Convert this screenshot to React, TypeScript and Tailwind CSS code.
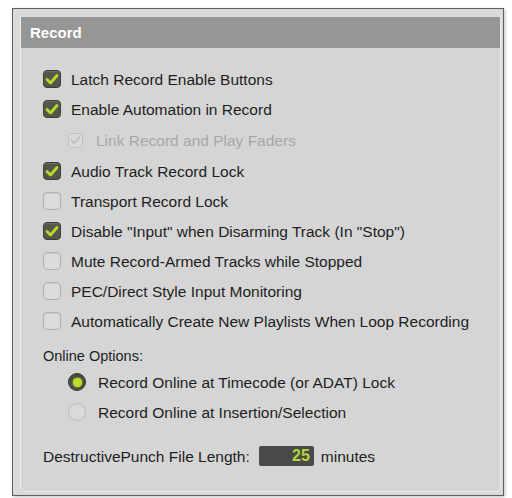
import React from "react";

const font = { fontFamily: '"Liberation Sans", Arial, sans-serif' };

function CheckBox({ state }: { state: "on" | "off" | "dis" }) {
  if (state === "on") {
    return (
      <div className="w-[18px] h-[18px] rounded-[4px] bg-[#55554a] border border-[#3e3e36] flex items-center justify-center shadow-[inset_0_1px_1px_rgba(255,255,255,0.15)]">
        <svg width="14" height="12" viewBox="0 0 14 12">
          <path d="M2 6.5 L5.5 10 L12 2.5" fill="none" stroke="#b6dc2a" strokeWidth="2.8" strokeLinecap="round" strokeLinejoin="round" />
        </svg>
      </div>
    );
  }
  if (state === "dis") {
    return (
      <div className="w-[15px] h-[15px] rounded-[3px] bg-[#dadada] border border-[#c2c2c2] flex items-center justify-center">
        <svg width="11" height="10" viewBox="0 0 14 12">
          <path d="M2 6.5 L5.5 10 L12 2.5" fill="none" stroke="#bdbdbd" strokeWidth="2" strokeLinecap="round" strokeLinejoin="round" />
        </svg>
      </div>
    );
  }
  return <div className="w-[18px] h-[18px] rounded-[4px] bg-[#dcdcdc] border border-[#b0b0b0] shadow-[inset_0_1px_1px_rgba(0,0,0,0.08)]" />;
}

function Row({ state, label, indent }: { state: "on" | "off" | "dis"; label: string; indent?: boolean }) {
  return (
    <div className={`flex items-center ${indent ? "h-[32px] pl-[47px]" : "h-[30px] pl-[22px]"}`}>
      <div className="w-[28px] flex">
        <CheckBox state={state} />
      </div>
      <span className={`text-[15.5px] leading-none pt-[1px] ${state === "dis" ? "text-[#a8a8a8]" : "text-[#1e1e1e]"}`}>{label}</span>
    </div>
  );
}

function Radio({ on, label }: { on: boolean; label: string }) {
  return (
    <div className="h-[30px] flex items-center pl-[47px]">
      <div className="w-[30px] flex">
        {on ? (
          <div className="w-[18px] h-[18px] rounded-full bg-[#4c4c40] border border-[#3a3a32] flex items-center justify-center">
            <div className="w-[9px] h-[9px] rounded-full bg-[#b8e02a] shadow-[0_0_2px_#c8f040]" />
          </div>
        ) : (
          <div className="w-[18px] h-[18px] rounded-full bg-[#dadada] border border-[#bcbcbc]" />
        )}
      </div>
      <span className="text-[15.5px] leading-none pt-[1px] text-[#1e1e1e]">{label}</span>
    </div>
  );
}

export default function App() {
  return (
    <div className="w-[512px] h-[498px] bg-white pt-[8px] pl-[12px] pr-[8px] pb-[2px]" style={font}>
      <div className="w-full h-[488px] border border-[#5e5e5e] bg-[#dadada] pt-[8px] pl-[7px] pr-[2px] pb-[3px] shadow-[1px_1px_3px_rgba(0,0,0,0.25)]">
        <div className="h-full flex flex-col rounded-b-[5px] border border-[#ececec] border-t-0 bg-[#d5d5d5]">
          <div className="h-[31px] bg-[#969696] flex items-center pl-[9px]">
            <span className="text-white font-bold text-[15px] leading-none">Record</span>
          </div>
          <div className="flex flex-col pt-[16px]">
            <Row state="on" label="Latch Record Enable Buttons" />
            <Row state="on" label="Enable Automation in Record" />
            <Row state="dis" label="Link Record and Play Faders" indent />
            <Row state="on" label="Audio Track Record Lock" />
            <Row state="off" label="Transport Record Lock" />
            <Row state="on" label='Disable "Input" when Disarming Track (In "Stop")' />
            <Row state="off" label="Mute Record-Armed Tracks while Stopped" />
            <Row state="off" label="PEC/Direct Style Input Monitoring" />
            <Row state="off" label="Automatically Create New Playlists When Loop Recording" />
            <div className="h-[23px] mt-[8px] flex items-center pl-[22px]">
              <span className="text-[14.5px] leading-none pt-[1px] text-[#1e1e1e]">Online Options:</span>
            </div>
            <Radio on label="Record Online at Timecode (or ADAT) Lock" />
            <Radio on={false} label="Record Online at Insertion/Selection" />
            <div className="h-[30px] mt-[14px] flex items-center pl-[22px]">
              <span className="text-[15.5px] leading-none pt-[1px] text-[#1e1e1e]">DestructivePunch File Length:</span>
              <div className="ml-[9px] w-[55px] h-[20px] bg-[#4a4a4a] rounded-[2px] flex items-center justify-end pr-[4px]">
                <span className="text-[16px] text-[#b3d63a] font-bold leading-none">25</span>
              </div>
              <span className="ml-[7px] text-[15.5px] leading-none pt-[1px] text-[#1e1e1e]">minutes</span>
            </div>
          </div>
        </div>
      </div>
    </div>
  );
}
